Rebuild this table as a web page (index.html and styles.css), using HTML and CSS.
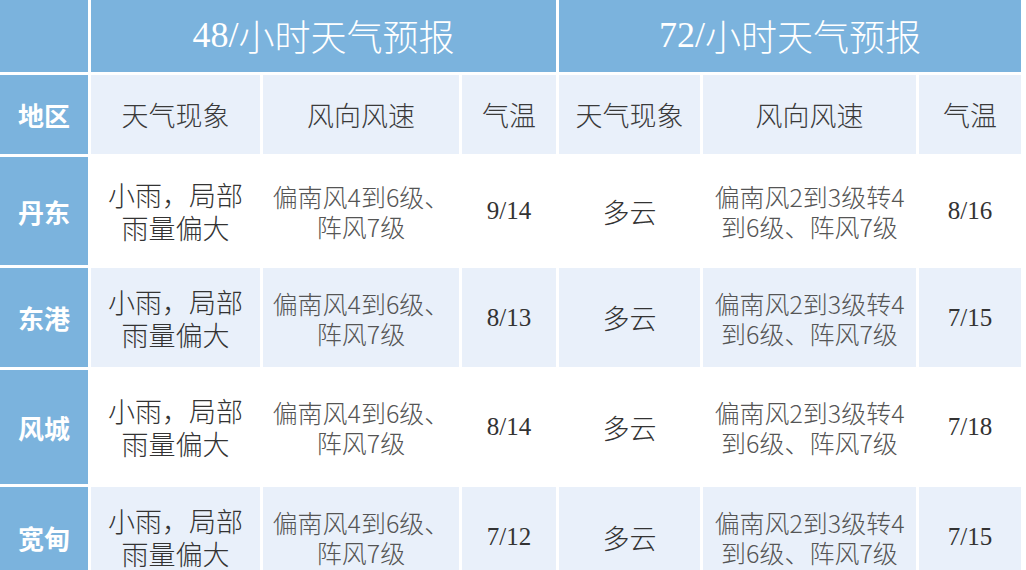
FILE: index.html
```html
<!DOCTYPE html>
<html lang="zh-CN">
<head>
<meta charset="utf-8">
<title>48/72小时天气预报</title>
<link rel="stylesheet" href="styles.css">
</head>
<body>
<div class="forecast">
  <div class="cell blue"></div>
  <div class="cell blue title span3"><span class="num">48/</span>小时天气预报</div>
  <div class="cell blue title span3"><span class="num">72/</span>小时天气预报</div>

  <div class="cell blue region">地区</div>
  <div class="cell light head">天气现象</div>
  <div class="cell light head">风向风速</div>
  <div class="cell light head">气温</div>
  <div class="cell light head">天气现象</div>
  <div class="cell light head">风向风速</div>
  <div class="cell light head">气温</div>

  <div class="cell blue region">丹东</div>
  <div class="cell white wx">小雨，局部<br>雨量偏大</div>
  <div class="cell white wind">偏南风4到6级、<br>阵风7级</div>
  <div class="cell white temp">9/14</div>
  <div class="cell white wx">多云</div>
  <div class="cell white wind">偏南风2到3级转4<br>到6级、阵风7级</div>
  <div class="cell white temp">8/16</div>

  <div class="cell blue region">东港</div>
  <div class="cell light wx">小雨，局部<br>雨量偏大</div>
  <div class="cell light wind">偏南风4到6级、<br>阵风7级</div>
  <div class="cell light temp">8/13</div>
  <div class="cell light wx">多云</div>
  <div class="cell light wind">偏南风2到3级转4<br>到6级、阵风7级</div>
  <div class="cell light temp">7/15</div>

  <div class="cell blue region">风城</div>
  <div class="cell white wx">小雨，局部<br>雨量偏大</div>
  <div class="cell white wind">偏南风4到6级、<br>阵风7级</div>
  <div class="cell white temp">8/14</div>
  <div class="cell white wx">多云</div>
  <div class="cell white wind">偏南风2到3级转4<br>到6级、阵风7级</div>
  <div class="cell white temp">7/18</div>

  <div class="cell blue region">宽甸</div>
  <div class="cell light wx">小雨，局部<br>雨量偏大</div>
  <div class="cell light wind">偏南风4到6级、<br>阵风7级</div>
  <div class="cell light temp">7/12</div>
  <div class="cell light wx">多云</div>
  <div class="cell light wind">偏南风2到3级转4<br>到6级、阵风7级</div>
  <div class="cell light temp">7/15</div>
</div>
</body>
</html>
```
FILE: styles.css
```css
html, body {
  margin: 0;
  padding: 0;
  background: #ffffff;
  overflow: hidden;
}

body {
  font-family: "Noto Sans CJK SC", sans-serif;
}

.forecast {
  display: grid;
  width: 1021px;
  grid-template-columns: 88px 169px 196px 94px 141px 213px 102px;
  grid-template-rows: 72px 79px 108px 99px 114px 100px;
  gap: 3px;
  background: #ffffff;
}

.cell {
  display: flex;
  align-items: center;
  justify-content: center;
  text-align: center;
  box-sizing: border-box;
}

.span3 {
  grid-column: span 3;
}

.blue {
  background: #7bb3dd;
  color: #ffffff;
}

.light {
  background: #e9f0fa;
}

.white {
  background: #ffffff;
}

.title {
  font-family: "Liberation Serif", "Noto Sans CJK SC", serif;
  font-size: 36px;
  font-weight: 300;
  color: #ffffff;
  padding-bottom: 2px;
}

.title .num {
  font-family: "Liberation Serif", serif;
  font-weight: 400;
}

.region {
  font-family: "Noto Sans CJK SC", sans-serif;
  font-size: 26px;
  font-weight: 700;
  color: #ffffff;
}

.head {
  font-size: 27px;
  font-weight: 300;
  color: #3a3a3a;
}

.wx {
  font-size: 27px;
  font-weight: 300;
  line-height: 33px;
  color: #333333;
}

.wind {
  font-size: 25px;
  font-weight: 300;
  line-height: 30px;
  color: #555555;
}

.temp {
  font-family: "Liberation Serif", serif;
  font-size: 25px;
  color: #333333;
}
```
